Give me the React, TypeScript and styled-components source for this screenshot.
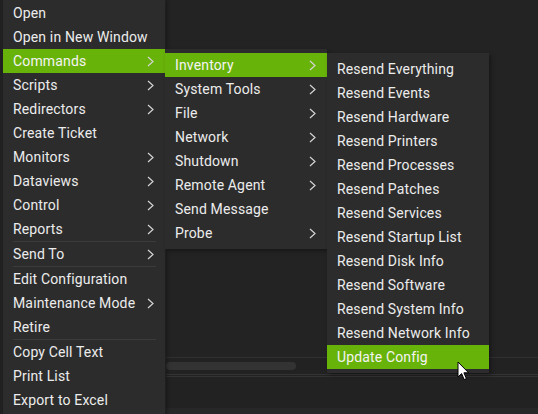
import styled, { createGlobalStyle } from "styled-components";

const GlobalStyle = createGlobalStyle`
  html, body {
    margin: 0;
    padding: 0;
    background: #222222;
  }
  body {
    font-family: Roboto, "Noto Sans", "Liberation Sans", sans-serif;
  }
`;

type Entry = { label: string; sub?: boolean; active?: boolean } | "sep";

const MAIN_MENU: Entry[] = [
  { label: "Open" },
  { label: "Open in New Window" },
  { label: "Commands", sub: true, active: true },
  { label: "Scripts", sub: true },
  { label: "Redirectors", sub: true },
  { label: "Create Ticket" },
  { label: "Monitors", sub: true },
  { label: "Dataviews", sub: true },
  { label: "Control", sub: true },
  { label: "Reports", sub: true },
  "sep",
  { label: "Send To", sub: true },
  "sep",
  { label: "Edit Configuration" },
  { label: "Maintenance Mode", sub: true },
  { label: "Retire" },
  "sep",
  { label: "Copy Cell Text" },
  { label: "Print List" },
  { label: "Export to Excel" },
];

const COMMANDS_MENU: Entry[] = [
  { label: "Inventory", sub: true, active: true },
  { label: "System Tools", sub: true },
  { label: "File", sub: true },
  { label: "Network", sub: true },
  { label: "Shutdown", sub: true },
  { label: "Remote Agent", sub: true },
  { label: "Send Message" },
  { label: "Probe", sub: true },
];

const INVENTORY_MENU: Entry[] = [
  { label: "Resend Everything" },
  { label: "Resend Events" },
  { label: "Resend Hardware" },
  { label: "Resend Printers" },
  { label: "Resend Processes" },
  { label: "Resend Patches" },
  { label: "Resend Services" },
  { label: "Resend Startup List" },
  { label: "Resend Disk Info" },
  { label: "Resend Software" },
  { label: "Resend System Info" },
  { label: "Resend Network Info" },
  { label: "Update Config", active: true },
];

function Chevron() {
  return (
    <svg width="7" height="11" viewBox="0 0 7 11">
      <polyline
        points="1,1 6,5.5 1,10"
        fill="none"
        stroke="#d4d4d4"
        strokeWidth="1.2"
      />
    </svg>
  );
}

function Menu({ items, left, top }: { items: Entry[]; left: number; top: number }) {
  return (
    <MenuPanel $left={left} $top={top}>
      {items.map((item, i) =>
        item === "sep" ? (
          <Separator key={i} />
        ) : (
          <Item key={i} $active={item.active}>
            <span>{item.label}</span>
            {item.sub && <Chevron />}
          </Item>
        ),
      )}
    </MenuPanel>
  );
}

export default function App() {
  return (
    <>
      <GlobalStyle />
      <Screen>
        <Backdrop>
          <Grid />
          <ScrollRow>
            <Thumb />
          </ScrollRow>
          <Footer />
        </Backdrop>
        <Menu items={MAIN_MENU} left={3} top={-3} />
        <Menu items={COMMANDS_MENU} left={165} top={49} />
        <Menu items={INVENTORY_MENU} left={327} top={53} />
        <Cursor width="13" height="20" viewBox="0 0 13 20">
          <path
            d="M1 1 L1 16 L4.6 12.6 L7.2 18.6 L9.4 17.6 L6.9 11.8 L11.6 11.8 Z"
            fill="#ffffff"
            stroke="#000000"
            strokeWidth="1"
            strokeLinejoin="round"
          />
        </Cursor>
      </Screen>
    </>
  );
}

const Screen = styled.div`
  position: relative;
  width: 538px;
  height: 414px;
  overflow: hidden;
  background: #222222;
`;

const Backdrop = styled.div`
  height: 100%;
  margin-left: 165px;
  display: flex;
  flex-direction: column;
  border-left: 1px solid #2b2b2b;
`;

const Grid = styled.div`
  height: 357px;
  background: #232323;
  border-bottom: 1px solid #303030;
`;

const ScrollRow = styled.div`
  height: 16px;
  display: flex;
  align-items: center;
  border-bottom: 3px double #333333;
`;

const Thumb = styled.div`
  width: 130px;
  height: 8px;
  border-radius: 4px;
  background: #333333;
`;

const Footer = styled.div`
  flex: 1;
  background: #222222;
  border-bottom: 6px solid #272727;
`;

const MenuPanel = styled.div<{ $left: number; $top: number }>`
  position: absolute;
  left: ${(p) => p.$left}px;
  top: ${(p) => p.$top}px;
  width: 162px;
  padding: 4px 0;
  background: #2c2c2c;
  box-shadow: 2px 2px 4px rgba(0, 0, 0, 0.35);
`;

const Item = styled.div<{ $active?: boolean }>`
  height: 24px;
  padding: 0 11px 0 10px;
  display: flex;
  align-items: center;
  justify-content: space-between;
  font-size: 14px;
  letter-spacing: 0.15px;
  color: ${(p) => (p.$active ? "#f4f4f4" : "#ececec")};
  background: ${(p) => (p.$active ? "#68b30a" : "transparent")};
  white-space: nowrap;
`;

const Separator = styled.div`
  height: 1px;
  margin: 0 9px 0 10px;
  background: #3b3b3b;
`;

const Cursor = styled.svg`
  position: absolute;
  left: 457px;
  top: 361px;
`;
